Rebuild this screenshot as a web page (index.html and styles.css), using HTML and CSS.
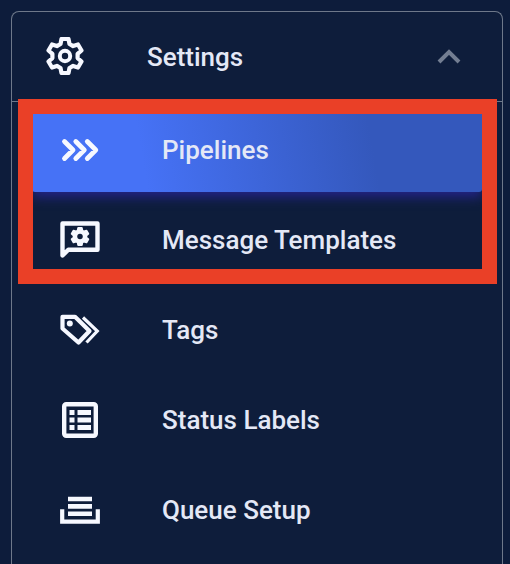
FILE: index.html
```html
<!DOCTYPE html>
<html lang="en">
<head>
    <meta charset="UTF-8">
    <meta name="viewport" content="width=device-width, initial-scale=1.0">
    <title>Settings</title>
    <link rel="stylesheet" href="styles.css">
</head>
<body>
    <nav class="settings-panel">
        <button type="button" class="panel-header" aria-expanded="true">
            <svg class="icon" viewBox="-20 -19 40 40">
                <path class="line" stroke-width="4.2" d="M-4.5-12-3.5-17H3.5L4.5-12 8.1-9.9 13-11.5 16.5-5.5 12.6-2.1V2.1L16.5 5.5 13 11.5 8.1 9.9 4.5 12 3.5 17H-3.5L-4.5 12-8.1 9.9-13 11.5-16.5 5.5-12.6 2.1V-2.1L-16.5-5.5-13-11.5-8.1-9.9Z"/>
                <circle class="line" stroke-width="4" r="5.2"/>
            </svg>
            <span class="label">Settings</span>
            <svg class="chevron" viewBox="0 0 24 24">
                <path d="M2 17 12 7l10 10"/>
            </svg>
        </button>

        <ul class="menu">
            <li>
                <a class="menu-item active" href="#pipelines">
                    <svg class="icon" viewBox="0 0 40 40">
                        <path class="line" stroke-width="4.8" d="M4.5 11.5 13 20l-8.5 8.5M15.8 11.5l8.5 8.5-8.5 8.5M27.3 11.5l8.5 8.5-8.5 8.5"/>
                    </svg>
                    <span class="label">Pipelines</span>
                </a>
            </li>
            <li>
                <a class="menu-item" href="#message-templates">
                    <svg class="icon" viewBox="0 0 40 40">
                        <path class="line" stroke-width="4.4" d="M2.5 35.5V3.5H37.5V29.7H8.3Z"/>
                        <g transform="translate(20 16.5) scale(.5)">
                            <path class="solid" d="M-4.5-12-3.5-17H3.5L4.5-12 8.1-9.9 13-11.5 16.5-5.5 12.6-2.1V2.1L16.5 5.5 13 11.5 8.1 9.9 4.5 12 3.5 17H-3.5L-4.5 12-8.1 9.9-13 11.5-16.5 5.5-12.6 2.1V-2.1L-16.5-5.5-13-11.5-8.1-9.9Z"/>
                            <circle class="hole" r="5.5"/>
                        </g>
                    </svg>
                    <span class="label">Message Templates</span>
                </a>
            </li>
            <li>
                <a class="menu-item" href="#tags">
                    <svg class="icon" viewBox="0 0 40 40">
                        <path class="line" stroke-width="4.2" d="M2.5 6.8H15L29.5 21 18.5 32.5 2.5 18.5Z"/>
                        <path class="line sharp" stroke-width="3.2" d="M23 7.5 37.3 21 26.5 32.5"/>
                        <circle class="dot" cx="9.8" cy="13.5" r="3"/>
                    </svg>
                    <span class="label">Tags</span>
                </a>
            </li>
            <li>
                <a class="menu-item" href="#status-labels">
                    <svg class="icon" viewBox="0 0 40 40">
                        <rect class="line" stroke-width="4.4" x="4.2" y="4.2" width="31.6" height="31.6" rx="2"/>
                        <path class="line sharp" stroke-width="4.8" d="M9.5 12.5h5M17.5 12.5H31M9.5 20h5M17.5 20H31M9.5 27.5h5M17.5 27.5H31"/>
                    </svg>
                    <span class="label">Status Labels</span>
                </a>
            </li>
            <li>
                <a class="menu-item" href="#queue-setup">
                    <svg class="icon" viewBox="0 0 40 40">
                        <path class="line sharp" stroke-width="4.6" d="M8 9H32M8 16.4H32M8 23.8H32"/>
                        <path class="line sharp" stroke-width="4.2" d="M2.2 19.3V31.6H37.8V19.3"/>
                    </svg>
                    <span class="label">Queue Setup</span>
                </a>
            </li>
        </ul>

        <!-- Frame drawn over the first two entries -->
        <div class="callout"></div>
    </nav>
</body>
</html>
```

FILE: styles.css
```css
* {
    box-sizing: border-box;
}
body {
    margin: 0;
    padding: 11px 7px 0 11px;
    background-color: #0d1c3b;
    font-family: Roboto, sans-serif;
    color: #e4e8f6;
}
.settings-panel {
    position: relative;
    min-height: calc(100vh - 11px);
    border: 1px solid #6e788a;
    border-bottom: none;
    border-radius: 8px 8px 0 0;
    background-color: #0e1d3b;
}
.panel-header {
    display: flex;
    align-items: center;
    gap: 62px;
    width: 100%;
    height: 90px;
    padding: 0 41px 0 33px;
    border: none;
    border-bottom: 1px solid #6e788a;
    background: none;
    color: inherit;
    font-family: inherit;
    text-align: left;
    cursor: pointer;
}
.label {
    flex: 1;
    font-size: 26px;
    font-weight: 500;
    line-height: 32px;
    white-space: nowrap;
}
.icon {
    flex: none;
    width: 40px;
    height: 40px;
}
.line {
    fill: none;
    stroke: #f6f8ff;
    stroke-linecap: round;
    stroke-linejoin: round;
}
.sharp {
    stroke-linecap: butt;
    stroke-linejoin: miter;
}
.solid {
    fill: #f6f8ff;
    stroke: #f6f8ff;
    stroke-width: 4;
    stroke-linejoin: round;
}
.dot {
    fill: #f6f8ff;
}
.hole {
    fill: #0e1d3b;
}
.chevron {
    width: 24px;
    height: 24px;
    fill: none;
    stroke: #737e92;
    stroke-width: 4;
}
.menu {
    display: flex;
    flex-direction: column;
    gap: 6px;
    margin: 0;
    padding: 6px 20px 0;
    list-style: none;
}
.menu-item {
    display: flex;
    align-items: center;
    gap: 62px;
    height: 84px;
    padding: 0 28px;
    border-radius: 3px;
    color: inherit;
    text-decoration: none;
}
.menu-item.active {
    background: linear-gradient(80deg, #4672f6 25%, #3458bc 75%);
    box-shadow: 0 5px 12px #24248a;
}
.callout {
    position: absolute;
    top: 87px;
    left: 6px;
    right: 5px;
    height: 185px;
    border: 15px solid #ea4027;
    pointer-events: none;
}
```
